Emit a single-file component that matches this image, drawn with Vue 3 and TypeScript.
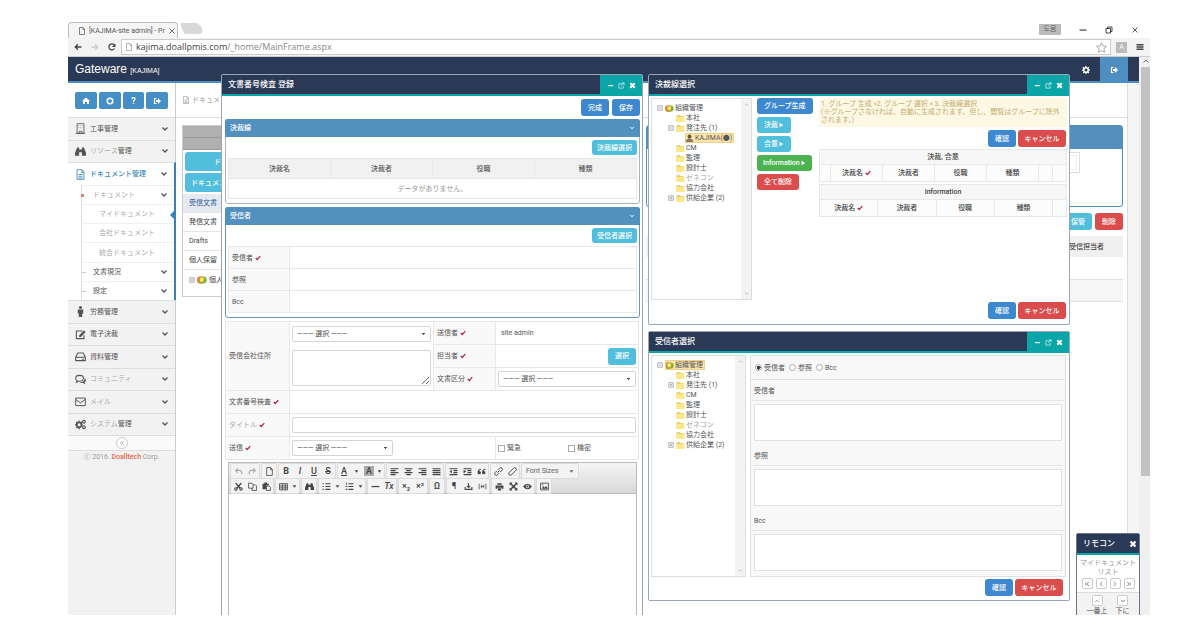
<script setup lang="ts">
import { h, ref } from 'vue'

const glyphs: Record<string, string> = {
  page: '<path d="M3 1h7l3 3v11H3zM10 1v4h3" fill="none" stroke="currentColor" stroke-width="1.4"/>',
  back: '<path d="M15 8H3M8 2.5 2.5 8 8 13.5" fill="none" stroke="currentColor" stroke-width="2.6"/>',
  forward: '<path d="M1 8h12M8 2.5 13.5 8 8 13.5" fill="none" stroke="currentColor" stroke-width="2.6"/>',
  reload: '<path d="M13 11a6 6 0 1 1 0-6.500" fill="none" stroke="currentColor" stroke-width="2.600"/><path d="M15 1v7H8z"/>',
  star: '<path d="m8 1 2.200 4.800 5 .6-3.700 3.500 1 5.100L8 12.500 3.500 15l1-5.100L.8 6.400l5-.6z" fill="none" stroke="currentColor" stroke-width="1.200"/>',
  menu: '<path d="M1 2h14v3H1zM1 6.500h14v3H1zM1 11h14v3H1z"/>',
  close: '<path d="m3 3 10 10M13 3 3 13" fill="none" stroke="currentColor" stroke-width="1.600"/>',
  closeBold: '<path d="m3 3 10 10M13 3 3 13" fill="none" stroke="currentColor" stroke-width="4.500"/>',
  minus: '<path d="M2 7h12v2.600H2z"/>',
  restore: '<path d="M2 5h9v9H2zM5 5V2h9v9h-3" fill="none" stroke="currentColor" stroke-width="1.800"/>',
  expand: '<path d="M10 4H2v10h10V9M9 2h5v5M14 2 7 9" fill="none" stroke="currentColor" stroke-width="1.400"/>',
  home: '<path d="M8 1 0 8h2v6h4v-4h4v4h4V8h2z"/>',
  circle: '<circle cx="8" cy="8" r="5.500" fill="none" stroke="currentColor" stroke-width="3"/>',
  exit: '<path d="M7 3H3v10h4" fill="none" stroke="currentColor" stroke-width="2.400"/><path d="M6 6h4V2l6 6-6 6v-4H6z"/>',
  gear: '<path fill-rule="evenodd" d="m6.500 0-.4 2.400-1.500.7L2.500 1.700.9 3.600l1.500 2L2 7l-2 .5v2l2.300.5.7 1.500-1.400 2 1.700 1.600 2-1.400 1.400.5.4 2.300h2l.5-2.300 1.500-.6 2 1.300 1.500-1.700-1.300-2 .6-1.500L16 9V7l-2.200-.5-.7-1.500 1.300-2-1.600-1.500-2 1.300-1.500-.6L8.800 0zM8 5a3 3 0 1 1 0 6 3 3 0 0 1 0-6z"/>',
  gears: '<path fill="none" stroke="currentColor" stroke-width="2.600" d="M6 5a3.500 3.500 0 1 1 0 7 3.500 3.500 0 0 1 0-7"/><path d="M6 2v2M6 13v2M0 8.500h2M10 8.500h1M2 4l1 1M10 4 9 5M2 13l1-1" stroke="currentColor" stroke-width="2"/><circle cx="13" cy="4" r="2" fill="none" stroke="currentColor" stroke-width="1.600"/><circle cx="13" cy="12" r="2" fill="none" stroke="currentColor" stroke-width="1.600"/>',
  building: '<path d="M3 1h10v14H3zM1 15h14M6 15v-3h4v3" fill="none" stroke="currentColor" stroke-width="1.200"/><path d="M5 4h1M8 4h1M11 4h1M5 7h1M8 7h1M11 7h1" stroke="currentColor"/>',
  find: '<path d="M3 2h3v3h4V2h3l3 8v4h-6V9H6v5H0v-4z"/>',
  file: '<path d="M3 1h7l3 3v11H3zM10 1v4h3M5 8h6M5 10.500h6M5 13h6" fill="none" stroke="currentColor" stroke-width="1.200"/>',
  man: '<circle cx="8" cy="2.200" r="2.200"/><path d="M4 5h8v6h-1.500v5h-5v-5H4z"/>',
  edit: '<path d="M11 3H2v11h11V9" fill="none" stroke="currentColor" stroke-width="1.600"/><path d="m6 9 7-7 2.500 2.500-7 7H6z"/>',
  drive: '<path d="m1 9 3-6h8l3 6v5H1zM1 9h14M10 12h3" fill="none" stroke="currentColor" stroke-width="1.500"/>',
  chat: '<path d="M6.500 2C3 2 1 4 1 6.300c0 1.500.8 2.600 2 3.300L2 12l3-1.500c5 .6 7.300-1.700 7.300-4.200S10 2 6.500 2z" fill="none" stroke="currentColor" stroke-width="1.500"/><path d="M14 6c3 2 2 5 0 6l1 3-3-2c-2 .4-4 0-5-1 5 0 7-2.500 7-6z"/>',
  mail: '<path d="M1 3h14v11H1zM1 5l7 5 7-5" fill="none" stroke="currentColor" stroke-width="1.400"/>',
  down: '<path d="m3 5 5 5 5-5" fill="none" stroke="currentColor" stroke-width="2.600"/>',
  up: '<path d="m3 11 5-5 5 5" fill="none" stroke="currentColor" stroke-width="2"/>',
  left: '<path d="m11 2-5 6 5 6" fill="none" stroke="currentColor" stroke-width="2"/>',
  right: '<path d="m5 2 5 6-5 6" fill="none" stroke="currentColor" stroke-width="2"/>',
  first: '<path d="M8 3 3 8l5 5M13 3 8 8l5 5" fill="none" stroke="currentColor" stroke-width="2"/>',
  last: '<path d="m3 3 5 5-5 5M8 3l5 5-5 5" fill="none" stroke="currentColor" stroke-width="2"/>',
  caret: '<path d="M2 4h12l-6 8z"/>',
  play: '<path d="m4 2 10 6-10 6z"/>',
  check: '<path d="m2 8 4 4 8-9" fill="none" stroke="currentColor" stroke-width="3.500"/>',
  folder: '<path d="M1 2h6l1.500 2H14v10H1z" fill="#e9c94c"/><path d="M2 5h13v9H1z" fill="#fbe88a"/>',
  globe: '<circle cx="6" cy="8" r="6" fill="#d9852b"/><circle cx="10" cy="8" r="5.500" fill="#86b336"/><path d="M5 4h5l1 3-2 4H6L4 8z" fill="#fbe36a"/>',
  plusBox: '<path d="M2 2h12v12H2zM5 8h6M8 5v6" fill="none" stroke="#889" stroke-width="1.800"/>',
  minusBox: '<path d="M2 2h12v12H2zM5 8h6" fill="none" stroke="#889" stroke-width="1.800"/>',
  user: '<circle cx="8" cy="4.500" r="3.500" fill="#654"/><path d="M1 15c0-5 3-7 7-7s7 2 7 7z" fill="#876"/>',
  undo: '<path d="M3 6h7q4 0 4 7M7 2 3 6l4 4" fill="none" stroke="currentColor" stroke-width="2"/>',
  redo: '<path d="M13 6H6q-4 0-4 7M9 2l4 4-4 4" fill="none" stroke="currentColor" stroke-width="2"/>',
  alignLeft: '<path d="M1 2h14v2H1zM1 5.500h9v2H1zM1 9h14v2H1zM1 12.500h9v2H1z"/>',
  alignCenter: '<path d="M1 2h14v2H1zM4 5.500h8v2H4zM1 9h14v2H1zM4 12.500h8v2H4z"/>',
  alignRight: '<path d="M1 2h14v2H1zM6 5.500h9v2H6zM1 9h14v2H1zM6 12.500h9v2H6z"/>',
  justify: '<path d="M1 2h14v2H1zM1 5.500h14v2H1zM1 9h14v2H1zM1 12.500h14v2H1z"/>',
  outdent: '<path d="M1 2h14v2H1zM8 5.500h7v2H8zM8 9h7v2H8zM1 12.500h14v2H1zM5 5v6L1 8z"/>',
  indent: '<path d="M1 2h14v2H1zM8 5.500h7v2H8zM8 9h7v2H8zM1 12.500h14v2H1zM1 5v6l5-3z"/>',
  quote: '<path d="M7 3C3 3 1 6 1 10a3 3 0 1 0 3-3c0-1 1-2 3-2zM15 3c-4 0-6 3-6 7a3 3 0 1 0 3-3c0-1 1-2 3-2z"/>',
  link: '<path d="m6 10 4-4M7 5l3-3a2.500 2.500 0 0 1 4 4l-3 3M9 11l-3 3a2.500 2.500 0 0 1-4-4l3-3" fill="none" stroke="currentColor" stroke-width="1.700"/>',
  unlink: '<path d="m7 5 3-3a2.500 2.500 0 0 1 4 4l-3 3-2 2-3 3a2.500 2.500 0 0 1-4-4l3-3z" fill="none" stroke="currentColor" stroke-width="1.700"/>',
  cut: '<path d="m3 2 8 9M13 2l-8 9" stroke="currentColor" stroke-width="2.600"/><circle cx="3.500" cy="12.500" r="2.200" fill="none" stroke="currentColor" stroke-width="1.800"/><circle cx="12.500" cy="12.500" r="2.200" fill="none" stroke="currentColor" stroke-width="1.800"/>',
  copy: '<path d="M1 2h6l2 2v7H1zM9 5h4l2 2v8H7v-4" fill="none" stroke="currentColor" stroke-width="1.400"/>',
  paste: '<path d="M1 3h3V1h5v2h3v3H7v7H1z"/><path d="M8 7h4l3 3v5H8z" fill="none" stroke="currentColor" stroke-width="1.500"/>',
  table: '<path d="M1 3h14v11H1zM1 7h14M1 10.500h14M6 3v11M11 3v11" fill="none" stroke="currentColor" stroke-width="1.500"/>',
  ul: '<path d="M1 2h2v2H1zM6 2h9v2H6zM1 7h2v2H1zM6 7h9v2H6zM1 12h2v2H1zM6 12h9v2H6z"/>',
  ol: '<path d="M2 1h1.500v4H2zM6 2h9v2H6zM1 7h3v2H1zM6 7h9v2H6zM1 12h3v2H1zM6 12h9v2H6z"/>',
  hr: '<path d="M1 7h14v2.200H1z"/>',
  download: '<path d="M7 2h2v5h3l-4 4-4-4h3zM1 9h2v3h10V9h2v5H1z"/>',
  nbsp: '<path d="M2 3v10M14 3v10M5 8h6M6 5v6M10 5v6" fill="none" stroke="currentColor" stroke-width="1.300"/>',
  print: '<path d="M4 2h8v3H4zM1 6h14v6h-3v-2H4v2H1zM5 11h6v4H5z"/>',
  full: '<path d="M1 1h5L4.500 2.500 8 6l3.500-3.500L10 1h5v5l-1.500-1.500L10 8l3.500 3.500L15 10v5h-5l1.500-1.500L8 10l-3.500 3.500L6 15H1v-5l1.500 1.500L6 8 2.500 4.500 1 6z"/>',
  eye: '<path fill-rule="evenodd" d="M0 8q8-10 16 0-8 10-16 0zm8-3a3 3 0 1 0 0 6 3 3 0 0 0 0-6z"/><circle cx="8" cy="8" r="1.800"/>',
  image: '<path d="M1 2h14v12H1z" fill="none" stroke="currentColor" stroke-width="1.500"/><path d="m3 12 3-5 2 3 3-3 3 5z"/><circle cx="5" cy="5" r="1.200"/>',
}

const Icon = (props: { name: string }) =>
  h('svg', { class: 'icon', viewBox: '0 0 16 16', fill: 'currentColor', 'aria-hidden': 'true', innerHTML: glyphs[props.name] })
Icon.props = ['name']

interface Item { icon: string; label: string; kana?: string; active?: boolean }
const menuTop: Item[] = [
  { icon: 'building', label: '工事管理' },
  { icon: 'find', kana: 'リソース', label: '管理' },
  { icon: 'file', label: 'ドキュメント管理', active: true },
]
const subMenu = [
  { kana: 'ドキュメント', label: '', level: 1, open: true },
  { kana: 'マイドキュメント', label: '', level: 2, current: true },
  { kana: '会社ドキュメント', label: '', level: 2 },
  { kana: '統合ドキュメント', label: '', level: 2 },
  { label: '文書現況', level: 1 },
  { label: '設定', level: 1 },
]
const menuBottom: Item[] = [
  { icon: 'man', label: '労務管理' },
  { icon: 'edit', label: '電子決裁' },
  { icon: 'drive', label: '資料管理' },
  { icon: 'chat', kana: 'コミュニティ', label: '' },
  { icon: 'mail', kana: 'メイル', label: '' },
  { icon: 'gears', kana: 'システム', label: '管理' },
]

interface Node { label: string; depth: number; toggle?: string; icon: string; hot?: boolean; faint?: boolean }
const groups: Node[] = [
  { label: 'CM', depth: 1, icon: 'folder' },
  { label: '監理', depth: 1, icon: 'folder' },
  { label: '設計士', depth: 1, icon: 'folder' },
  { label: 'ゼネコン', depth: 1, icon: 'folder', faint: true },
  { label: '協力会社', depth: 1, icon: 'folder' },
  { label: '供給企業 (2)', depth: 1, icon: 'folder', toggle: 'plusBox' },
]
const approvalTree: Node[] = [
  { label: '組織管理', depth: 0, icon: 'globe', toggle: 'minusBox' },
  { label: '本社', depth: 1, icon: 'folder' },
  { label: '発注先 (1)', depth: 1, icon: 'folder', toggle: 'minusBox' },
  { label: 'KAJIMA(●)', depth: 2, icon: 'user', hot: true },
  ...groups,
]
const recipientTree: Node[] = [
  { label: '組織管理', depth: 0, icon: 'globe', toggle: 'minusBox', hot: true },
  { label: '本社', depth: 1, icon: 'folder' },
  { label: '発注先 (1)', depth: 1, icon: 'folder', toggle: 'plusBox' },
  ...groups,
]

interface Tool { t: string; icon?: string; text?: string; cls?: string; split?: boolean }
const ic = (icon: string, t = icon): Tool => ({ icon, t })
const toolRows: Tool[][][] = [
  [
    [{ icon: 'undo', t: 'undo', cls: 'off' }, { icon: 'redo', t: 'redo', cls: 'off' }],
    [ic('page')],
    [{ text: 'B', t: 'bold', cls: 'b' }, { text: 'I', t: 'italic', cls: 'i' }, { text: 'U', t: 'underline', cls: 'u' }, { text: 'S', t: 'strike', cls: 's' }],
    [{ text: 'A', t: 'color', cls: 'u', split: true }, { text: 'A', t: 'background', cls: 'mark', split: true }],
    [ic('alignLeft'), ic('alignCenter'), ic('alignRight'), ic('justify')],
    [ic('outdent'), ic('indent'), ic('quote')],
    [ic('link'), ic('unlink')],
  ],
  [
    [ic('cut'), ic('copy'), ic('paste')],
    [{ icon: 'table', t: 'table', split: true }],
    [ic('find')],
    [{ icon: 'ul', t: 'bullets', split: true }, { icon: 'ol', t: 'numbers', split: true }],
    [ic('hr'), { text: 'Tx', t: 'clear', cls: 'i' }],
    [{ text: '×₂', t: 'subscript' }, { text: '×²', t: 'superscript' }],
    [{ text: 'Ω', t: 'symbol' }],
    [{ text: '¶', t: 'blocks' }, ic('download'), ic('nbsp')],
    [ic('print'), ic('full'), ic('eye')],
    [ic('image')],
  ],
]
const boxes = [
  { id: 'to', label: '受信者' },
  { id: 'cc', label: '参照' },
  { id: 'bcc', label: 'Bcc' },
]
const kind = ref('to')
</script>

<template>
  <div class="stage">
    <div class="screen">
      <div class="tabs">
        <div class="tab"><Icon name="page" /><span>[KAJIMA-site admin] - Pr</span><Icon name="close" /></div>
        <div class="newtab"></div>
        <div class="wincontrols"><span class="lang">도움</span><Icon name="hr" /><Icon name="restore" /><Icon name="close" /></div>
      </div>
      <div class="address">
        <Icon name="back" /><Icon name="forward" class="pale" /><Icon name="reload" />
        <div class="url"><Icon name="page" class="grey" /><span>kajima.doallpmis.com<i>/_home/MainFrame.aspx</i></span><Icon name="star" class="grey star" /></div>
        <span class="ext">A</span><Icon name="menu" />
      </div>

      <div class="viewport">
        <div class="page">
          <header class="top">
            <h1>Gateware <small>[KAJIMA]</small></h1>
            <button class="topbtn" aria-label="settings"><Icon name="gear" /></button>
            <button class="topbtn lit" aria-label="logout"><Icon name="exit" /></button>
          </header>
          <div class="body">
            <nav class="side">
              <div class="quick">
                <button aria-label="home"><Icon name="home" /></button>
                <button aria-label="refresh"><Icon name="circle" /></button>
                <button aria-label="help"><b>?</b></button>
                <button aria-label="exit"><Icon name="exit" /></button>
              </div>
              <div class="menu three">
                <a v-for="m in menuTop" :key="m.icon" href="#" :class="{ active: m.active }"><Icon :name="m.icon" /><span><i v-if="m.kana" class="faint">{{ m.kana }}</i>{{ m.label }}</span><Icon name="down" /></a>
              </div>
              <div class="sub">
                <a v-for="(m, i) in subMenu" :key="i" href="#" :class="['l' + m.level, { open: m.open, current: m.current }]"><span><i v-if="m.kana" class="faint">{{ m.kana }}</i>{{ m.label }}</span><Icon v-if="m.level === 1" name="down" /></a>
              </div>
              <div class="menu six">
                <a v-for="m in menuBottom" :key="m.icon" href="#"><Icon :name="m.icon" /><span><i v-if="m.kana" class="faint">{{ m.kana }}</i>{{ m.label }}</span><Icon name="down" /></a>
              </div>
              <div class="collapse"><button aria-label="collapse"><Icon name="first" /></button></div>
              <footer>ⓒ 2016. <b>Doalltech</b> Corp.</footer>
            </nav>

            <main>
              <div class="crumb"><Icon name="file" /><span>ドキュメント</span></div>
              <div class="cols">
                <section class="boxes">
                  <div class="greyhead"></div>
                  <div class="greyhead"></div>
                  <button class="btn cyan mid">ドキュメント</button>
                  <button class="btn cyan">ドキュメント</button>
                  <a class="sel" href="#">受信文書</a>
                  <a href="#">発信文書</a>
                  <a href="#">Drafts</a>
                  <a href="#">個人保留</a>
                  <a href="#" class="node"><Icon name="plusBox" /><Icon name="globe" /><span>個人</span></a>
                </section>
                <div class="splitter"><Icon name="left" /></div>
                <section class="list">
                  <div class="search"><div class="bluehead"></div><div class="field"><input aria-label="検索" /></div></div>
                  <div class="acts"><button class="btn cyan">保管</button><button class="btn red">削除</button></div>
                  <table class="grid"><thead><tr><th>受信担当者</th></tr></thead><tbody><tr><td></td></tr><tr class="alt"><td></td></tr></tbody></table>
                </section>
              </div>
            </main>
          </div>
        </div>
        <div class="scroll"><Icon name="up" /><div class="thumb"></div></div>
      </div>

      <section class="win doc">
        <header><h2>文書番号検査 登録</h2><div class="ctl"><button aria-label="minimize"><Icon name="minus" /></button><button aria-label="expand"><Icon name="expand" /></button><button aria-label="close"><Icon name="closeBold" /></button></div></header>
        <div class="bar"><button class="btn blue">完成</button><button class="btn blue">保存</button></div>
        <div class="panel">
          <h3>決裁線<Icon name="down" /></h3>
          <div class="tool"><button class="btn cyan small">決裁線選択</button></div>
          <table class="t approvals">
            <thead><tr><th>決裁名</th><th>決裁者</th><th>役職</th><th>種類</th></tr></thead>
            <tbody><tr><td colspan="4">データがありません。</td></tr></tbody>
          </table>
        </div>
        <div class="panel second">
          <h3>受信者<Icon name="down" /></h3>
          <div class="tool"><button class="btn cyan small">受信者選択</button></div>
          <table class="t kv">
            <tbody>
              <tr><th>受信者 <Icon name="check" class="req" /></th><td></td></tr>
              <tr><th>参照</th><td></td></tr>
              <tr><th>Bcc</th><td></td></tr>
            </tbody>
          </table>
        </div>
        <table class="t form">
          <colgroup><col class="c1" /><col class="c2" /><col class="c3" /><col /></colgroup>
          <tbody>
            <tr>
              <th rowspan="3"><label for="addr">受信会社住所</label></th>
              <td rowspan="3" class="stack"><select aria-label="受信会社"><option>——— 選択 ———</option></select><textarea id="addr"></textarea></td>
              <th>送信者 <Icon name="check" class="req" /></th><td class="plain">site admin</td>
            </tr>
            <tr><th>担当者 <Icon name="check" class="req" /></th><td class="end"><button class="btn cyan">選択</button></td></tr>
            <tr><th><label for="cls">文書区分</label> <Icon name="check" class="req" /></th><td><select id="cls"><option>——— 選択 ———</option></select></td></tr>
            <tr><th>文書番号検査 <Icon name="check" class="req" /></th><td colspan="3"></td></tr>
            <tr><th class="faint"><label for="title">タイトル</label> <Icon name="check" class="req" /></th><td colspan="3"><input id="title" type="text" /></td></tr>
            <tr>
              <th><label for="send">送信</label> <Icon name="check" class="req" /></th><td colspan="2"><select id="send" class="short"><option>——— 選択 ———</option></select></td>
              <td><div class="checks"><label><input type="checkbox" />緊急</label><label><input type="checkbox" />機密</label></div></td>
            </tr>
          </tbody>
        </table>
        <div class="editor">
          <div class="tools">
            <div v-for="(row, r) in toolRows" :key="r" class="trow">
              <div v-for="(g, i) in row" :key="i" class="tg">
                <button v-for="b in g" :key="b.t" :aria-label="b.t" :class="[b.cls, { split: b.split }]"><Icon v-if="b.icon" :name="b.icon" /><span v-else>{{ b.text }}</span><Icon v-if="b.split" name="caret" class="car" /></button>
              </div>
              <div v-if="r === 0" class="tg"><button class="sizes">Font Sizes<Icon name="caret" class="car" /></button></div>
            </div>
          </div>
        </div>
      </section>

      <section class="win appr">
        <header><h2>決裁線選択</h2><div class="ctl"><button aria-label="minimize"><Icon name="minus" /></button><button aria-label="expand"><Icon name="expand" /></button><button aria-label="close"><Icon name="closeBold" /></button></div></header>
        <div class="split3">
          <div class="tree">
            <ul><li v-for="n in approvalTree" :key="n.label" :class="['d' + n.depth, { faint: n.faint }]"><Icon v-if="n.toggle" :name="n.toggle" class="tog" /><span :class="{ hot: n.hot }"><Icon :name="n.icon" />{{ n.label }}</span></li></ul>
            <div class="mini"><Icon name="up" /><Icon name="down" /></div>
          </div>
          <div class="stackbtns">
            <button class="btn blue wide">グループ生成</button>
            <button class="btn cyan">決裁 <Icon name="play" /></button>
            <button class="btn cyan">合意 <Icon name="play" /></button>
            <button class="btn green">Information<Icon name="play" /></button>
            <button class="btn red">全て削除</button>
          </div>
          <div class="right">
            <p class="note">1. グループ 生成 »2. グループ 選択 » 3. 決裁線選択<br />(※グループさなければ、自動に生成されます。但し、閲覧はグループに除外されます。)</p>
            <div class="pair"><button class="btn blue">確認</button><button class="btn red cancel">キャンセル</button></div>
            <table class="t mini1">
              <colgroup><col class="n" /><col /><col /><col /><col /><col class="m" /><col class="m" /></colgroup>
              <tbody><tr class="cap"><th colspan="7">決裁, 合意</th></tr>
                <tr><th></th><th>決裁名 <Icon name="check" class="req" /></th><th>決裁者</th><th>役職</th><th>種類</th><th></th><th></th></tr></tbody>
            </table>
            <table class="t mini1">
              <colgroup><col /><col /><col /><col /><col class="m" /></colgroup>
              <tbody><tr class="cap"><th colspan="5">Information</th></tr>
                <tr><th>決裁名 <Icon name="check" class="req" /></th><th>決裁者</th><th>役職</th><th>種類</th><th></th></tr></tbody>
            </table>
          </div>
        </div>
        <div class="pair foot"><button class="btn blue">確認</button><button class="btn red cancel">キャンセル</button></div>
      </section>

      <section class="win recv">
        <header><h2>受信者選択</h2><div class="ctl"><button aria-label="minimize"><Icon name="minus" /></button><button aria-label="expand"><Icon name="expand" /></button><button aria-label="close"><Icon name="closeBold" /></button></div></header>
        <div class="split3">
          <div class="tree">
            <ul><li v-for="n in recipientTree" :key="n.label" :class="['d' + n.depth, { faint: n.faint }]"><Icon v-if="n.toggle" :name="n.toggle" class="tog" /><span :class="{ hot: n.hot }"><Icon :name="n.icon" />{{ n.label }}</span></li></ul>
            <div class="mini"><Icon name="up" /><Icon name="down" /></div>
          </div>
          <div class="targets">
            <div class="radios"><label v-for="b in boxes" :key="b.id"><input v-model="kind" type="radio" name="kind" :value="b.id" />{{ b.label }}</label></div>
            <div v-for="b in boxes" :key="b.id" class="target"><label :for="b.id">{{ b.label }}</label><textarea :id="b.id"></textarea></div>
          </div>
        </div>
        <div class="pair foot"><button class="btn blue">確認</button><button class="btn red cancel">キャンセル</button></div>
      </section>

      <section class="win remote">
        <header><h2>リモコン</h2><button aria-label="close"><Icon name="closeBold" /></button></header>
        <p>マイドキュメント<br />リスト</p>
        <div class="pager"><button v-for="d in ['first', 'left', 'right', 'last']" :key="d" :aria-label="d"><Icon :name="d" /></button></div>
        <div class="ends"><label><button aria-label="top"><Icon name="up" /></button>一番上</label><label><button aria-label="bottom"><Icon name="down" /></button>下に</label></div>
      </section>
    </div>
  </div>
</template>

<style>
body { margin: 0; background: #fff; }
</style>

<style scoped>
* { box-sizing: border-box; }
.stage { height: 100vh; padding: 20px 40px 10px 68px; font: 7px/10px Roboto, "Noto Sans CJK JP", "Noto Sans CJK KR", sans-serif; color: #555; }
.screen { position: relative; height: 100%; overflow: hidden; display: flex; flex-direction: column; background: #fff; }
.icon { width: 8px; height: 8px; flex: none; vertical-align: middle; }
button, input, select, textarea { font: inherit; color: inherit; margin: 0; }
button { display: inline-flex; align-items: center; justify-content: center; padding: 0; border: 0; background: none; white-space: nowrap; }
a { color: inherit; text-decoration: none; }
h1, h2, h3, p, ul { margin: 0; padding: 0; font-weight: normal; }
.faint { color: #aaa; font-style: normal; }

.tabs { display: flex; height: 18px; align-items: flex-end; font-size: 7px; }
.tab { display: flex; align-items: center; gap: 3px; width: 110px; height: 16px; padding: 0 1px 0 9px; border: 1px solid #bbb; border-bottom: 0; border-radius: 4px 4px 0 0; background: #f5f5f5; white-space: nowrap; }
.tab span { flex: 1; }
.newtab { width: 20px; height: 11px; margin: 0 0 4px 4px; background: #d8d8d8; border-radius: 2px 5px 5px 2px; transform: skewX(20deg); }
.wincontrols { margin-left: auto; display: flex; align-items: center; gap: 18px; padding: 0 11px 3px 0; color: #333; }
.lang { width: 22px; height: 11px; background: #bbb; color: #666; text-align: center; }
.address { display: flex; align-items: center; gap: 9px; height: 19px; padding: 0 6px; background: #f3f3f3; border-bottom: 1px solid #ccc; color: #444; }
.address .pale { color: #ccc; }
.grey { color: #999; }
.url { flex: 1; display: flex; align-items: center; gap: 3px; height: 16px; padding: 0 3px; margin: 0 -4px; border: 1px solid #ccc; background: #fff; font: 9px/14px "Open Sans", sans-serif; }
.url i { font-style: normal; color: #888; }
.star { margin-left: auto; width: 11px; height: 11px; }
.ext { width: 11px; height: 11px; background: #bbb; color: #fff; text-align: center; }

.viewport { flex: 1; display: flex; min-height: 0; }
.page { flex: 1; min-width: 0; display: flex; flex-direction: column; }
.scroll { width: 11px; background: #f0f0f0; color: #777; display: flex; flex-direction: column; align-items: center; gap: 2px; padding-left: 2px; }
.thumb { width: 9px; height: 409px; background: #c2c2c2; }
.top { display: flex; height: 26px; padding: 0 11px 0 7px; background: #2a3955; border-bottom: 2px solid #4f8ec0; color: #fff; }
.top h1 { margin-right: auto; font: 12px/25px "Liberation Sans", sans-serif; }
.top small { font-size: 7px; }
.topbtn { width: 28px; height: 26px; }
.lit { background: #4f8ec0; }
.body { flex: 1; display: flex; min-height: 0; }

.side { width: 108px; display: flex; flex-direction: column; background: #f2f2f2; border-right: 1px solid #ccc; }
.quick { display: flex; gap: 2px; height: 34px; padding: 9px 7px 8px; background: #fff; }
.quick button { width: 22px; height: 17px; border-radius: 2px; background: #468ec6; color: #fff; font-size: 9px; }
.menu { display: grid; grid-auto-rows: 1fr; }
.three { height: 68px; }
.six { height: 135px; }
.menu a { display: flex; align-items: center; gap: 4px; padding: 0 6px 0 7px; border-top: 1px solid #ddd; }
.menu a .icon:first-child { width: 11px; height: 11px; }
.menu span { flex: 1; }
.menu a.active { background: #fff; color: #3484b8; font-weight: 500; border-right: 2px solid #3484b8; margin-right: -1px; }
.menu a.active .icon:last-child { color: #555; }
.sub { display: grid; grid-auto-rows: 1fr; height: 115px; margin-right: -1px; padding-left: 13px; background: #fff; border-right: 2px solid #3484b8; }
.sub a { position: relative; display: flex; align-items: center; justify-content: space-between; border-left: 1px solid #ddd; border-top: 1px solid #f0f0f0; padding: 0 6px 0 11px; }
.sub .l2 { padding-left: 17px; }
.sub a.l1::before { content: ""; position: absolute; left: 0; top: 9px; width: 4px; height: 1px; background: #ccc; }
.sub a.open::before { left: -1px; top: 8px; width: 3px; height: 3px; background: #e08080; }
.sub a.current::after { content: ""; position: absolute; right: 0; top: 6px; border: 4px solid transparent; border-right-color: #3484b8; border-left: 0; }
.collapse { height: 16px; display: flex; justify-content: center; align-items: center; border-top: 1px solid #ddd; border-bottom: 1px solid #ddd; background: #fafafa; }
.collapse button { width: 12px; height: 12px; border: 1px solid #ccc; border-radius: 50%; background: #fff; color: #aaa; }
.collapse .icon { width: 6px; height: 6px; }
footer { padding-top: 1px; text-align: center; color: #999; }
footer b { color: #e2694c; font-weight: 500; }

main { flex: 1; min-width: 0; margin-right: 11px; border-right: 1px solid #ddd; box-shadow: 11px 0 #f5f5f5; background: #fff; }
.crumb { display: flex; align-items: center; gap: 2px; height: 35px; padding-left: 6px; border-bottom: 1px solid #ddd; color: #999; }
.cols { display: flex; padding: 7px 4px 0 6px; }
.boxes { width: 300px; height: 172px; border: 1px solid #ccc; display: flex; flex-direction: column; }
.greyhead { height: 12px; background: #b0b0b0; border-bottom: 1px solid #999; }
.boxes .btn { height: 19px; margin: 2px 2px 0; justify-content: flex-start; padding-left: 6px; }
.boxes .btn.mid { padding-left: 29px; }
.boxes a { height: 19px; padding: 4px 6px; border-bottom: 1px solid #e5e5e5; color: #444; }
.boxes .btn + a { margin-top: 2px; }
.boxes .sel { background: #e5e9f0; color: #2d5c9a; }
.boxes a.node { display: flex; gap: 2px; align-items: center; border: 0; }
.boxes .node .icon { width: 6px; height: 6px; }
.boxes .node .icon + .icon { width: 10px; height: 10px; }
.splitter { width: 164px; padding-top: 160px; text-align: right; color: #999; }
.splitter .icon { width: 6px; height: 6px; margin-right: 1px; }
.list { flex: 1; min-width: 0; }
.search { height: 82px; border: 1px solid #4f8ec0; border-radius: 3px; }
.bluehead { height: 23px; background: #5390bf; }
.field { display: flex; justify-content: flex-end; width: 100%; padding: 3px 42px 0; }
.field input { width: 80px; height: 21px; border: 1px solid #ddd; outline: 1px solid #eee; outline-offset: -4px; }
.acts { display: flex; justify-content: flex-end; gap: 3px; padding: 6px 0; }
.acts .btn { width: 28px; height: 17px; }
.grid { width: 100%; border-collapse: collapse; }
.grid th { height: 21px; background: #f0f0f0; text-align: right; padding: 0 19px 0 0; color: #444; font-weight: 500; }
.grid td { height: 22px; border-bottom: 1px solid #e2e2e2; }
.grid .alt { background: #f6f6f6; }

.btn { border-radius: 3px; color: #fff; font-weight: 500; }
.blue { background: #3e88cf; }
.cyan { background: #51bedd; }
.green { background: #4cb350; }
.red { background: #db4d4d; }

.win { position: absolute; display: flex; flex-direction: column; width: 422px; background: #fff; border: 1px solid #9aa5b5; border-radius: 2px; }
.win > header { display: flex; flex: none; height: 21px; background: #2a3955; border-bottom: 2px solid #0aa5a8; color: #fff; }
.win h2 { margin-right: auto; padding-left: 6px; font-size: 8px; line-height: 19px; font-weight: 500; }
.ctl { display: flex; align-items: center; justify-content: center; gap: 4px; width: 42px; height: 21px; background: #09a5a7; }
.ctl .icon { width: 7px; height: 7px; }
.doc { left: 153px; top: 54px; bottom: -6px; }
.appr { left: 580px; top: 54px; }
.recv { left: 580px; top: 311px; }
.bar { display: flex; justify-content: flex-end; gap: 3px; padding: 3px 2px; }
.bar .btn { width: 28px; height: 17px; }
.panel { flex: none; margin: 0 2px 3px 3px; border: 1px solid #a9b3bb; border-radius: 3px; padding-bottom: 4px; }
.panel.second { border-color: #6b94b8; }
.panel h3 { display: flex; justify-content: space-between; align-items: center; height: 18px; margin: -1px -1px 0; padding: 0 5px; background: #5290bf; color: #fff; font-size: 7px; font-weight: 500; border-radius: 3px 3px 0 0; }
.panel h3 .icon { width: 6px; height: 6px; }
.tool { display: flex; justify-content: flex-end; padding: 3px 2px; }
.small { width: 45px; height: 15px; }
.t { width: 100%; border-collapse: collapse; table-layout: fixed; }
.t th, .t td { border: 1px solid #e8e8e8; padding: 0 3px; font-weight: 500; text-align: left; }
.req { color: #b82c4a; width: 6px; height: 6px; }
.approvals { margin: 0 2px; width: calc(100% - 4px); }
.approvals th { height: 20px; background: #f1f1f1; }
.approvals th, .approvals td { text-align: center; }
.approvals td { height: 20px; color: #999; font-weight: 400; }
.kv th, .kv td { height: 22px; font-weight: 400; }
.kv { margin: 0 2px; width: calc(100% - 4px); }
.kv th { width: 61px; background: #f9f9f9; }
.form { flex: none; margin: 0 3px 2px; width: calc(100% - 6px); }
.form th, .form td { height: 23px; }
.form th { background: #f9f9f9; font-weight: 400; }
.form td { padding: 0 2px; font-weight: 400; }
.form .plain { padding: 0 5px; }
.form .end { text-align: right; }
.form .end .btn { width: 28px; height: 17px; }
.c1 { width: 64px; }
.c2 { width: 144px; }
.c3 { width: 62px; }
select, input[type="text"], textarea { display: block; width: 100%; height: 16px; border: 1px solid #d5d5d5; border-radius: 2px; background: #fff; padding: 0 3px; outline: 0; }
select { appearance: none; padding: 0 4px; background: linear-gradient(#555, #555) right 5px top 6px / 3px 1px no-repeat, linear-gradient(#555, #555) right 6px top 7px / 1px 1px no-repeat, #fff; }
.stack textarea { height: 36px; margin-top: 8px; resize: vertical; }
select.short { width: 101px; }
.checks { display: flex; gap: 47px; }
.checks label, .radios label { display: flex; align-items: center; gap: 2px; }
input[type="checkbox"], input[type="radio"] { appearance: none; width: 7px; height: 7px; border: 1px solid #aaa; background: #fff; }
input[type="radio"] { border-radius: 50%; }
input[type="radio"]:checked { background: radial-gradient(circle, #444 0 2px, #fff 2px); }
.editor { flex: 1; margin: 0 5px 0 6px; border: 1px solid #bbb; }
.tools { display: grid; gap: 1px; padding: 1px 2px; height: 31px; background: linear-gradient(#f5f5f5, #d8d8d8); border-bottom: 1px solid #bbb; }
.trow { display: flex; gap: 3px; }
.tg { display: flex; background: #f3f3f3; border-radius: 1px; box-shadow: 0 0 0 1px #dcdcdc; color: #444; }
.tg button { width: 14px; height: 14px; font-size: 9px; font-weight: 500; }
.tg .icon { width: 9px; height: 9px; }
.tg .split { width: 23px; justify-content: space-between; padding: 0 2px 0 3px; }
.tg .icon.car { width: 5px; height: 5px; }
.tg .sizes { width: 56px; padding: 0 4px; justify-content: space-between; font-size: 7px; font-weight: 400; color: #666; }
.tg .off { color: #aaa; }
.tg .b { font-weight: 700; }
.i { font-style: italic; }
.u { text-decoration: underline; }
.s { text-decoration: line-through; }
.mark span { background: #aaa; padding: 0 2px; }

.split3 { display: flex; padding: 2px 2px 0; }
.tree { flex: none; display: flex; width: 101px; height: 202px; border: 1px solid #ddd; }
.tree ul { flex: 1; padding-top: 4px; list-style: none; display: grid; grid-auto-rows: 10px; align-content: start; }
.tree li { display: flex; align-items: center; gap: 2px; height: 10px; white-space: nowrap; }
.tree li span { display: inline-flex; align-items: center; gap: 1px; }
.tree span .icon { width: 9px; height: 9px; }
.tree .tog { width: 6px; height: 6px; }
.d0 { padding-left: 5px; }
.d1 { padding-left: 24px; }
.d1:has(.tog) { padding-left: 16px; }
.d2 { padding-left: 33px; }
.hot { background: #fce6ae; outline: 1px solid #f0d089; outline-offset: -1px; padding-right: 2px; }
.mini { width: 10px; display: flex; flex-direction: column; justify-content: space-between; align-items: center; padding: 3px 0; background: #f3f3f3; color: #aaa; }
.mini .icon { width: 5px; height: 5px; }
.stackbtns { display: flex; flex-direction: column; align-items: flex-start; gap: 3px; width: 67px; padding: 0 0 0 5px; }
.stackbtns .btn { height: 16px; padding: 0 7px; }
.stackbtns .icon { width: 6px; height: 6px; }
.stackbtns .green { padding: 0 6px; }
.right { flex: 1; min-width: 0; }
.note { height: 29px; padding: 2px 2px; background: #fcf8e3; color: #c6ad73; line-height: 8px; }
.pair { display: flex; justify-content: flex-end; gap: 2px; padding: 3px 1px 2px; }
.pair .btn { width: 28px; height: 17px; }
.pair .btn.cancel { width: 48px; }
.mini1 { margin-bottom: 2px; }
.mini1 th { height: 17px; text-align: center; background: #fcfcfc; color: #444; padding: 0; }
.mini1 .cap th { height: 15px; background: #f7f7f7; }
.n { width: 11px; }
.m { width: 14px; }
.appr .foot { padding: 2px 3px 5px; }
.recv .tree { width: 95px; height: 222px; }
.recv > .split3 { gap: 4px; }
.targets { flex: 1; border: 1px solid #e2e2e2; background: #f8f8f8; margin-right: 1px; }
.radios { display: flex; align-items: center; gap: 4px; height: 24px; padding-left: 4px; border-bottom: 1px solid #e2e2e2; }
.target > label { display: block; height: 21px; padding: 6px 3px; border-bottom: 1px solid #e6e6e6; }
.target textarea { width: calc(100% - 6px); height: 37px; margin: 3px 3px 4px; border-color: #e2e2e2; border-radius: 0; resize: none; }
.recv .foot { padding: 2px 6px 4px; }
.remote { width: 64px; right: 10px; top: 513px; bottom: -4px; border-color: #68758a; }
.remote > header { padding-right: 2px; }
.remote p { padding-top: 4px; text-align: center; line-height: 9px; color: #999; }
.pager { display: flex; justify-content: center; gap: 3px; padding: 1px 0 3px; }
.pager button, .ends button { width: 11px; height: 11px; border: 1px solid #ccc; border-radius: 2px; background: #fff; color: #777; }
.pager .icon, .ends .icon { width: 6px; height: 6px; }
.ends { flex: 1; display: flex; justify-content: center; gap: 8px; padding-top: 2px; background: #f3f3f3; border-top: 1px solid #ddd; }
.ends label { display: flex; flex-direction: column; align-items: center; }
</style>
